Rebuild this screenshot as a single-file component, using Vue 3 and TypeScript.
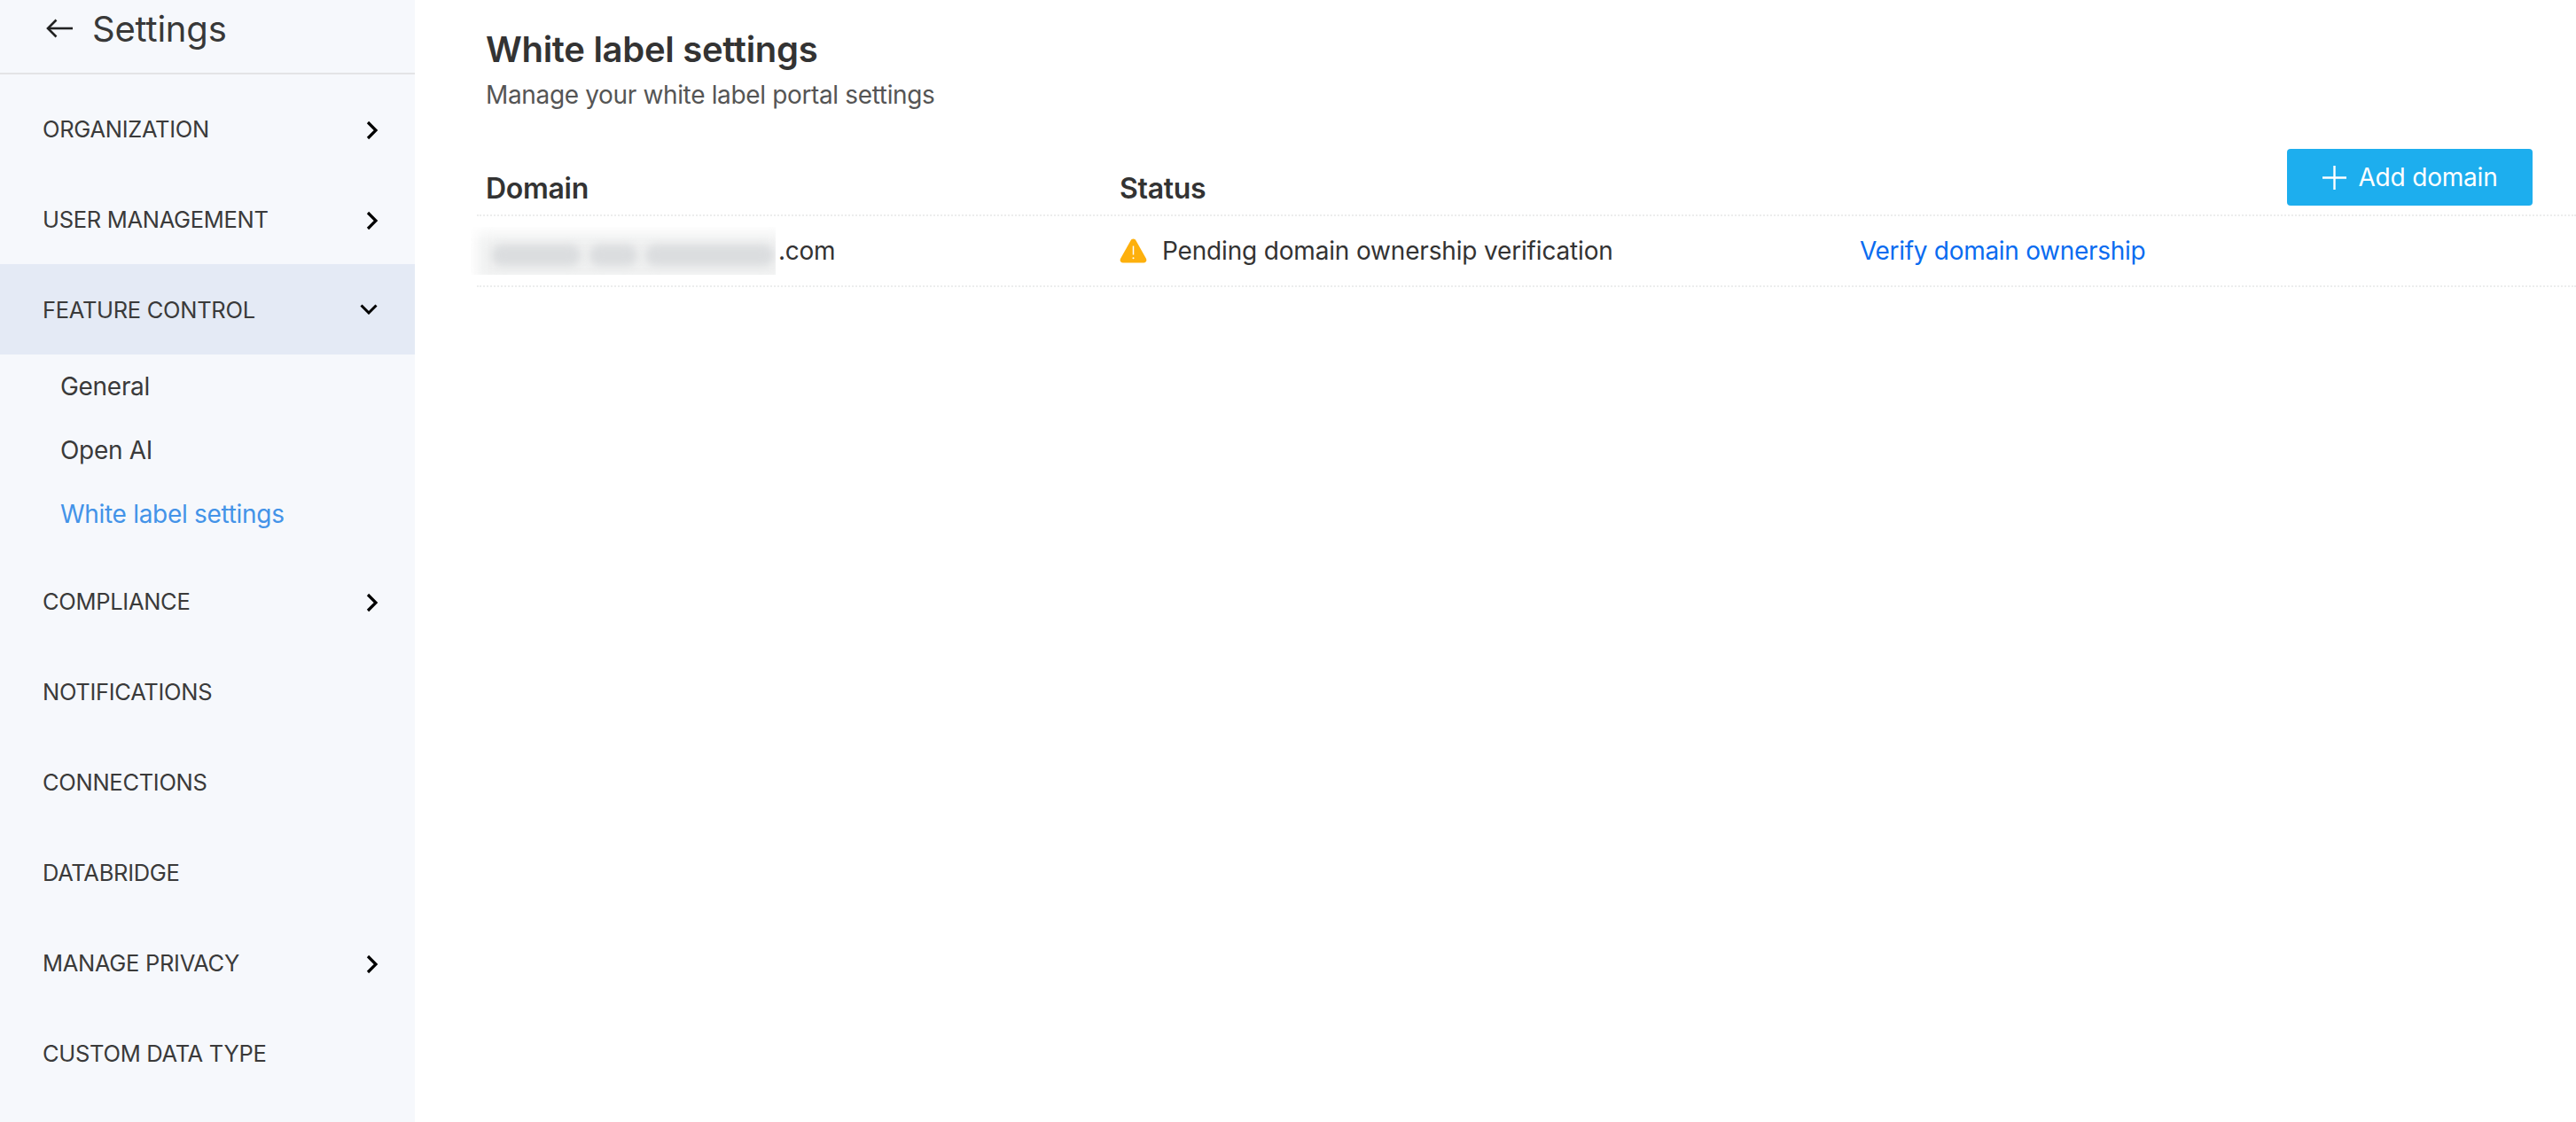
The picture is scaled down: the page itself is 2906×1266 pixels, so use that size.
<script setup lang="ts">
interface NavItem {
  label: string
  chevron?: 'right' | 'down'
  active?: boolean
  children?: { label: string; current?: boolean }[]
}

const nav: NavItem[] = [
  { label: 'ORGANIZATION', chevron: 'right' },
  { label: 'USER MANAGEMENT', chevron: 'right' },
  {
    label: 'FEATURE CONTROL',
    chevron: 'down',
    active: true,
    children: [{ label: 'General' }, { label: 'Open AI' }, { label: 'White label settings', current: true }],
  },
  { label: 'COMPLIANCE', chevron: 'right' },
  { label: 'NOTIFICATIONS' },
  { label: 'CONNECTIONS' },
  { label: 'DATABRIDGE' },
  { label: 'MANAGE PRIVACY', chevron: 'right' },
  { label: 'CUSTOM DATA TYPE' },
]
</script>

<template>
  <div class="page">
    <aside class="sidebar">
      <header class="side-head">
        <svg class="back" width="30" height="22" viewBox="0 0 30 22" fill="none" stroke="#222" stroke-width="2.600">
          <path d="M30 11H2" />
          <path d="M11.500 1.500 2 11l9.500 9.500" />
        </svg>
        <span class="side-title">Settings</span>
      </header>
      <nav class="nav">
        <template v-for="item in nav" :key="item.label">
          <div class="nav-item" :class="{ active: item.active }">
            <span>{{ item.label }}</span>
            <svg v-if="item.chevron === 'right'" class="chev-right" width="14" height="22" viewBox="0 0 14 22" fill="none" stroke="#000" stroke-width="3.200">
              <path d="M2 2l9 9-9 9" />
            </svg>
            <svg v-else-if="item.chevron === 'down'" class="chev-down" width="20" height="12" viewBox="0 0 20 12" fill="none" stroke="#000" stroke-width="3">
              <path d="M1.500 1.500 10 10l8.500-8.500" />
            </svg>
          </div>
          <div v-if="item.children" class="sub">
            <div v-for="c in item.children" :key="c.label" class="sub-item" :class="{ current: c.current }">{{ c.label }}</div>
          </div>
        </template>
      </nav>
    </aside>

    <main class="main">
      <h1 class="title">White label settings</h1>
      <p class="subtitle">Manage your white label portal settings</p>
      <div class="table">
        <div class="row head">
          <div class="cell-domain">Domain</div>
          <div class="cell-status">Status</div>
          <div class="cell-action">
            <button class="add" type="button">
              <svg width="27" height="27" viewBox="0 0 27 27" stroke="#fff" stroke-width="2.400" fill="none">
                <path d="M13.500 0v27M0 13.500h27" />
              </svg>
              <span>Add domain</span>
            </button>
          </div>
        </div>
        <div class="row body">
          <div class="cell-domain domain">
            <span class="blurred" aria-hidden="true">
              <i class="halo"></i><i class="blob b1"></i><i class="blob b2"></i><i class="blob b3"></i>
            </span>
            <span>.com</span>
          </div>
          <div class="cell-status status">
            <svg width="31" height="28" viewBox="0 0 31 28">
              <path d="M15.500 .500c1.300 0 2.300.7 3 1.900l11.300 20.200c1.300 2.400.2 4.900-2.600 4.900H3.800c-2.800 0-3.900-2.500-2.600-4.900L12.500 2.400c.7-1.200 1.700-1.900 3-1.900z" fill="#fdb00d" />
              <path d="M15.500 8.500v10" stroke="#fff" stroke-width="1.500" />
              <circle cx="15.500" cy="22.300" r="1" fill="#fff" />
            </svg>
            <span class="status-text">Pending domain ownership verification</span>
          </div>
          <div class="cell-action"><a class="verify">Verify domain ownership</a></div>
        </div>
      </div>
    </main>
  </div>
</template>

<style>
html,
body {
  margin: 0;
  background: #fff;
}
</style>

<style scoped>
.page {
  display: flex;
  width: 2906px;
  height: 1266px;
  overflow: hidden;
  font-family: Inter, 'Noto Sans', sans-serif;
  color: #333;
}
.sidebar {
  width: 468px;
  flex: none;
  background: #f6f8fc;
}
.side-head {
  height: 84px;
  box-sizing: border-box;
  border-bottom: 2px solid #e3e4e6;
  display: flex;
  align-items: center;
  padding: 0 0 18px 52px;
  gap: 22px;
}
.side-title {
  font-size: 40px;
  letter-spacing: -0.2px;
  color: #383838;
}
.nav {
  padding-top: 10px;
  color: #3a3a3a;
}
.nav-item {
  height: 102px;
  display: flex;
  align-items: center;
  justify-content: space-between;
  padding: 0 42px 0 48px;
  font-size: 25.5px;
  letter-spacing: -0.3px;
}
.nav-item.active {
  background: #e4eaf5;
}
.chev-right {
  margin-top: 4px;
  margin-right: -1px;
}
.sub {
  padding-bottom: 11px;
}
.sub-item {
  height: 72px;
  display: flex;
  align-items: center;
  padding-left: 68px;
  font-size: 28px;
  letter-spacing: -0.3px;
}
.sub-item.current {
  color: #4393e8;
}
.main {
  flex: 1;
  min-width: 0;
  padding-left: 80px;
}
.title {
  margin: 31px 0 0;
  font-size: 40px;
  line-height: 50px;
  font-weight: 600;
  letter-spacing: -0.3px;
  color: #333;
}
.subtitle {
  margin: 7px 0 0;
  font-size: 28px;
  line-height: 38px;
  letter-spacing: -0.35px;
  color: #555;
}
.table {
  margin: 42px 0 0 -10px;
}
.row {
  display: grid;
  grid-template-columns: 715px 835px 1fr;
  padding-left: 10px;
  border-bottom: 2px dotted #eceded;
}
.row.head {
  height: 76px;
  box-sizing: border-box;
  align-items: end;
  font-size: 32px;
  font-weight: 600;
  letter-spacing: -0.3px;
  padding-bottom: 15px;
}
.row.body {
  height: 80px;
  box-sizing: border-box;
  align-items: center;
  font-size: 28px;
  letter-spacing: -0.3px;
}
.head .cell-action {
  display: flex;
  justify-content: flex-end;
  padding-right: 49px;
  align-self: start;
}
.add {
  width: 277px;
  height: 64px;
  border: 0;
  border-radius: 4px;
  background: #1daeee;
  color: #fff;
  font: inherit;
  font-size: 28px;
  font-weight: 400;
  letter-spacing: -0.2px;
  display: flex;
  align-items: center;
  justify-content: center;
  gap: 14px;
  padding: 0;
}
.domain {
  display: flex;
  align-items: center;
}
.blurred {
  position: relative;
  width: 344px;
  height: 54px;
  margin-left: -17px;
  margin-right: 3px;
  overflow: hidden;
  flex: none;
}
.halo {
  position: absolute;
  left: 8px;
  right: -10px;
  top: 8px;
  bottom: -8px;
  background: #eff0f0;
  filter: blur(8px);
}
.blob {
  position: absolute;
  top: 20px;
  height: 24px;
  background: #dbdddf;
  border-radius: 12px;
  filter: blur(4px);
}
.b1 {
  left: 24px;
  width: 100px;
}
.b2 {
  left: 134px;
  width: 54px;
}
.b3 {
  left: 197px;
  width: 145px;
}
.status {
  display: flex;
  align-items: center;
  gap: 17px;
}
.status-text {
  letter-spacing: -0.17px;
}
.verify {
  color: #0a6cf0;
}
</style>
